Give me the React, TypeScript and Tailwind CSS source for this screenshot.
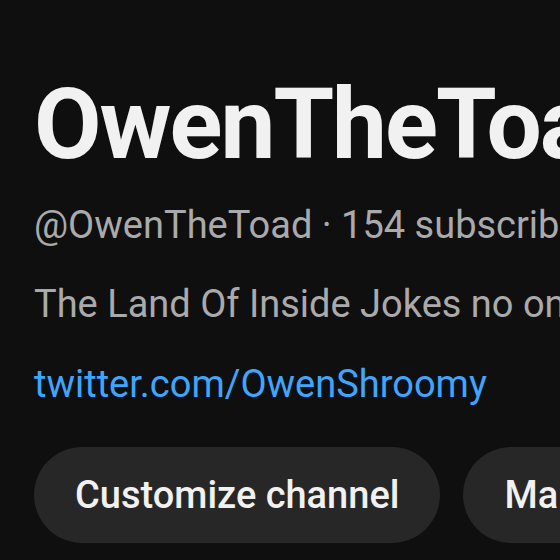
export default function App() {
  return (
    <div className="w-[560px] h-[560px] overflow-hidden bg-[#0f0f0f] text-[#f1f1f1] font-['Roboto',_'Liberation_Sans',_sans-serif]">
      <div className="pt-[76px] pl-[34px] whitespace-nowrap">
        {/* Channel name */}
        <h1 className="text-[98px] leading-[98px] font-bold tracking-[-2px] text-[#f1f1f1]">
          OwenTheToad
        </h1>

        {/* Handle + stats */}
        <div className="mt-[23px] text-[38px] leading-[57px] text-[#aaaaaa]">
          @OwenTheToad · 154 subscribers · 12 videos
        </div>

        {/* Description */}
        <div className="mt-[22px] text-[38px] leading-[57px] text-[#aaaaaa]">
          The Land Of Inside Jokes no one else gets
        </div>

        {/* Link */}
        <div className="mt-[23px] text-[38px] leading-[57px] text-[#3ea6ff]">
          twitter.com/OwenShroomy
        </div>

        {/* Buttons */}
        <div className="mt-[34px] flex gap-[23px]">
          <button className="h-[96px] px-[41px] rounded-full bg-[#272727] text-[38px] font-medium text-[#f1f1f1]">
            Customize channel
          </button>
          <button className="h-[96px] px-[41px] rounded-full bg-[#272727] text-[38px] font-medium text-[#f1f1f1]">
            Manage videos
          </button>
        </div>
      </div>
    </div>
  );
}
